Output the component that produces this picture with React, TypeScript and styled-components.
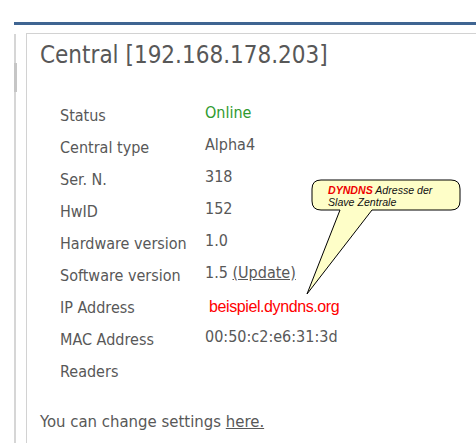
import React from "react";
import styled, { createGlobalStyle } from "styled-components";

const Global = createGlobalStyle`
  html, body { margin: 0; padding: 0; background: #ffffff; }
  body { font-family: "DejaVu Sans Condensed", "DejaVu Sans", sans-serif; font-stretch: condensed; }
`;

const Page = styled.div`
  position: relative;
  width: 476px;
  height: 443px;
  overflow: hidden;
  padding: 22px 0 0 14px;
  box-sizing: border-box;
`;

const TopBar = styled.div`
  height: 3px;
  background: #3f6592;
`;

const Body = styled.div`
  display: flex;
  margin-top: 8px;
  height: 410px;
`;

const Rail = styled.div`
  width: 2px;
  background: #d6d6d6;
  margin-top: 1px;
`;

const Thumb = styled.div`
  width: 3px;
  height: 29px;
  margin-top: 29px;
  background: #c6c6c6;
`;

const Panel = styled.div`
  flex: 1;
  margin-left: 10px;
  border-top: 1px solid #d2d2d2;
  border-left: 1px solid #d2d2d2;
  padding-left: 13px;
  color: #585858;
`;

const Title = styled.h1`
  margin: 7px 0 0 0;
  font-size: 24px;
  line-height: 28px;
  font-weight: normal;
  color: #585858;
`;

const Table = styled.div`
  margin-top: 30px;
  padding-left: 20px;
  display: flex;
  flex-direction: column;
`;

const Row = styled.div`
  display: flex;
  align-items: center;
  height: 32px;
  font-size: 16px;
`;

const Label = styled.div`
  width: 145px;
  flex-shrink: 0;
`;

const Value = styled.div<{ $tone?: "green" | "red" }>`
  padding-bottom: ${(p) => (p.$tone === "red" ? "0" : "6px")};
  color: ${(p) => (p.$tone === "green" ? "#2f9a2f" : p.$tone === "red" ? "#ff0000" : "#585858")};
  ${(p) =>
    p.$tone === "red"
      ? `font-family: "Liberation Sans", Arial, sans-serif; font-stretch: normal; font-size: 16px; letter-spacing: -0.4px; margin-left: 4px;`
      : ""}
`;

const Link = styled.span`
  text-decoration: underline;
  color: #585858;
`;

const Footer = styled.div`
  margin-top: 18px;
  height: 32px;
  display: flex;
  align-items: center;
  font-size: 16.6px;
`;

const Callout = styled.div`
  position: absolute;
  left: 300px;
  top: 176px;
  width: 170px;
  height: 125px;
`;

const CalloutText = styled.div`
  position: absolute;
  left: 28px;
  top: 8px;
  font-family: "Liberation Sans", Arial, sans-serif;
  font-stretch: normal;
  font-style: italic;
  font-size: 10.6px;
  line-height: 12px;
  color: #111111;
  white-space: nowrap;
`;

const Strong = styled.span`
  color: #ee0000;
  font-weight: bold;
`;

const rows: { label: string; value: React.ReactNode; tone?: "green" | "red" }[] = [
  { label: "Status", value: "Online", tone: "green" },
  { label: "Central type", value: "Alpha4" },
  { label: "Ser. N.", value: "318" },
  { label: "HwID", value: "152" },
  { label: "Hardware version", value: "1.0" },
  {
    label: "Software version",
    value: (
      <>
        1.5 <Link>(Update)</Link>
      </>
    ),
  },
  { label: "IP Address", value: "beispiel.dyndns.org", tone: "red" },
  { label: "MAC Address", value: "00:50:c2:e6:31:3d" },
  { label: "Readers", value: "" },
];

export default function App() {
  return (
    <>
      <Global />
      <Page>
        <TopBar />
        <Body>
          <Rail>
            <Thumb />
          </Rail>
          <Panel>
            <Title>Central [192.168.178.203]</Title>
            <Table>
              {rows.map((r) => (
                <Row key={r.label}>
                  <Label>{r.label}</Label>
                  <Value $tone={r.tone}>{r.value}</Value>
                </Row>
              ))}
            </Table>
            <Footer>
              You can change settings&nbsp;<Link>here.</Link>
            </Footer>
          </Panel>
        </Body>
        <Callout>
          <svg width="170" height="125" viewBox="0 0 170 125">
            <path
              d="M21 4 H151 Q160 4 160 13 V25 Q160 34 151 34 H72 L7 118 L40 34 H21 Q12 34 12 25 V13 Q12 4 21 4 Z"
              fill="#fefec8"
              stroke="#000"
              strokeWidth="1"
              strokeLinejoin="round"
            />
          </svg>
          <CalloutText>
            <Strong>DYNDNS</Strong> Adresse der
            <br />
            Slave Zentrale
          </CalloutText>
        </Callout>
      </Page>
    </>
  );
}
